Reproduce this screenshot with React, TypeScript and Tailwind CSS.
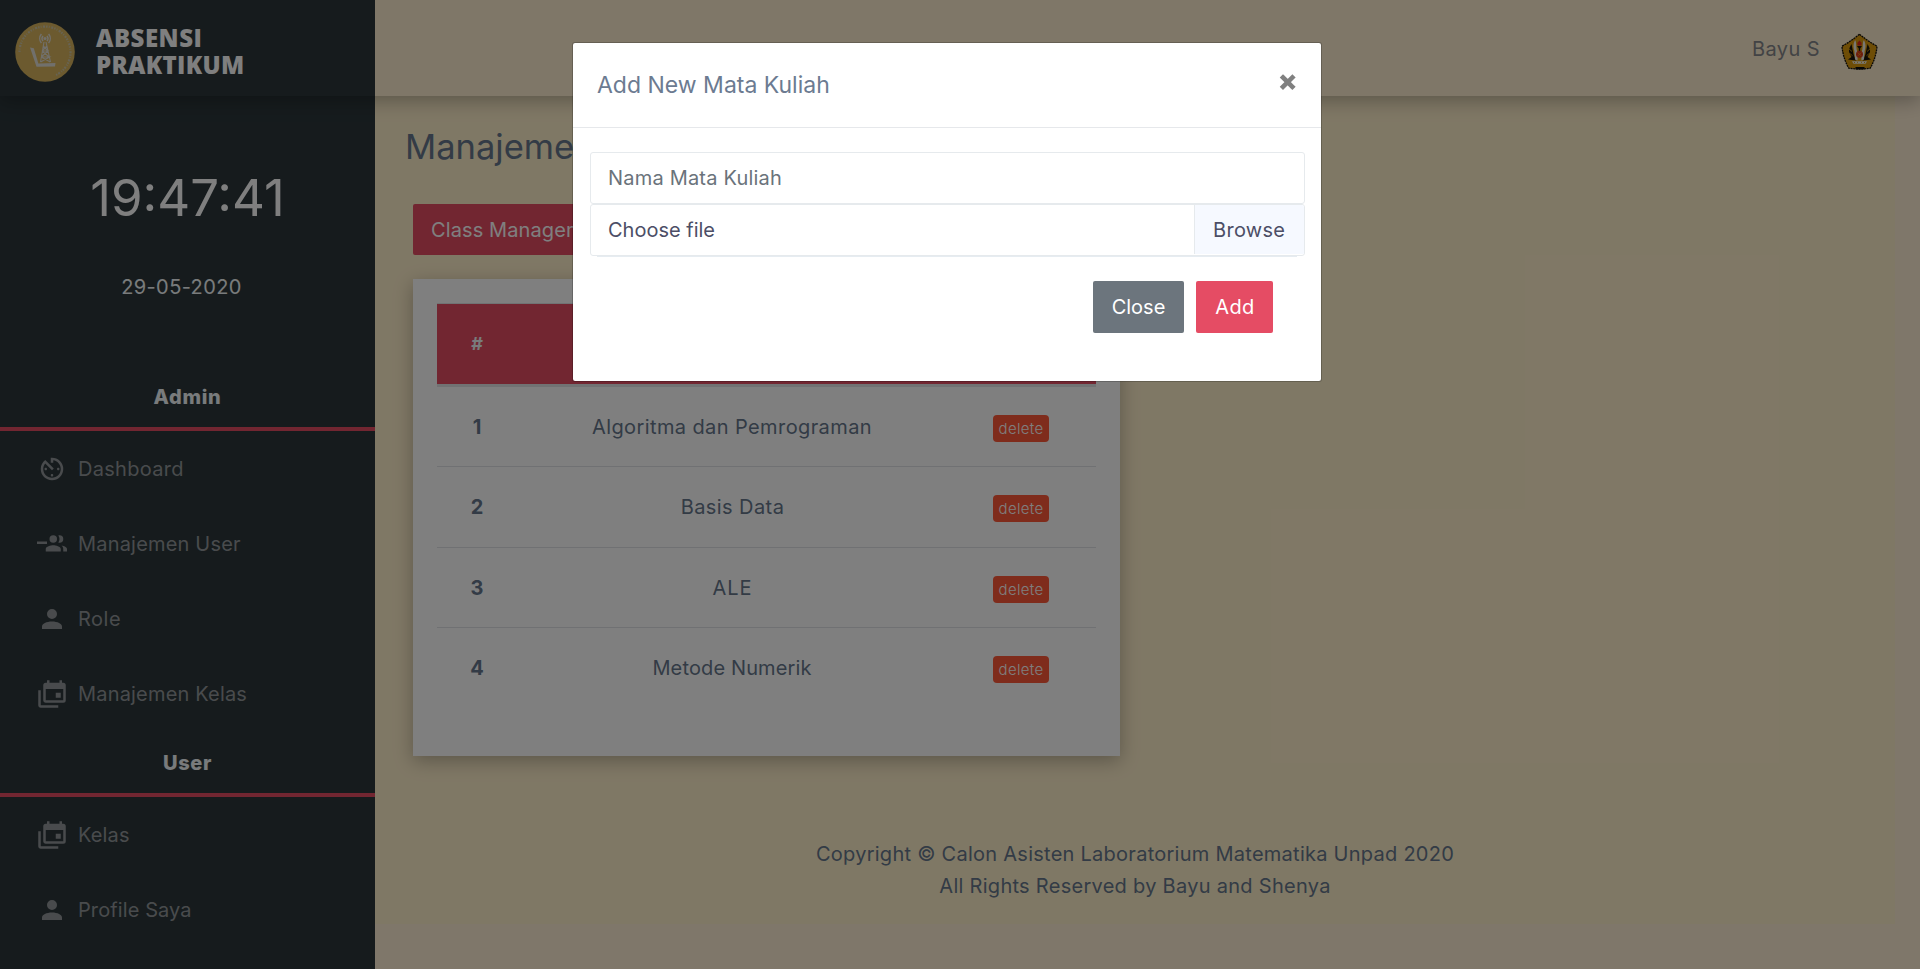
import { MdAvTimer } from "react-icons/md";
import type { ReactNode } from "react";

const PATHS = {
  users:
    "M13 13C11 13 7 14 7 16V18H19V16C19 14 15 13 13 13M19.62 13.16C20.45 13.88 21 14.82 21 16V18H24V16C24 14.46 21.63 13.5 19.62 13.16M13 11A3 3 0 0 0 16 8 3 3 0 0 0 13 5 3 3 0 0 0 10 8 3 3 0 0 0 13 11M18 11A3 3 0 0 0 21 8 3 3 0 0 0 18 5C17.68 5 17.37 5.05 17.08 5.14A5 5 0 0 1 18 8C18 9 17.69 10 17.08 10.85 17.37 10.95 17.68 11 18 11M8 10H0V12H8V10Z",
  account:
    "M12 4A4 4 0 0 1 16 8 4 4 0 0 1 12 12 4 4 0 0 1 8 8 4 4 0 0 1 12 4M12 14C16.42 14 20 15.79 20 18V20H4V18C4 15.79 7.58 14 12 14Z",
  calendar:
    "M21 17V8H7V17H21M21 3A2 2 0 0 1 23 5V17A2 2 0 0 1 21 19H7C5.89 19 5 18.1 5 17V5A2 2 0 0 1 7 3H8V1H10V3H18V1H20V3H21M3 21H17V23H3C1.89 23 1 22.1 1 21V9H3V21M19 15H15V11H19V15Z",
};

function Icon({ d }: { d: string }) {
  return (
    <svg viewBox="0 0 24 24" className="size-[30px] fill-current">
      <path d={d} />
    </svg>
  );
}

function BrandLogo() {
  return (
    <svg viewBox="0 0 60 60" className="size-[60px]">
      <circle cx="30" cy="30" r="29.8" fill="#d8b55e" />
      <path
        d="M4.5 30A25.5 25.5 0 1 1 40 53.5"
        fill="none"
        stroke="#cfc7a8"
        strokeWidth="2.2"
        strokeDasharray="1.4 1.3 0.8 1.6 2 1.1"
      />
      <path d="M15 25.5L18.8 26.2 23.4 41.5 40.5 41 40 44.4 21.5 44.8z" fill="#e3e0d8" />
      <path
        d="M29 20L25.5 40M31 20L35.5 40M28.2 24L33 29M32 24L27 29M27 29H33L26.2 35M27 29L34.2 35M26.2 35H34.5L25.6 40M26.2 35L35.2 40"
        fill="none"
        stroke="#e3e0d8"
        strokeWidth="1.1"
      />
      <path
        d="M26.4 12A7 7 0 0 0 26.4 21M33.6 12A7 7 0 0 1 33.6 21M28 14A4 4 0 0 0 28 19M32 14A4 4 0 0 1 32 19"
        fill="none"
        stroke="#e3e0d8"
        strokeWidth="1.5"
      />
      <circle cx="30" cy="16.5" r="1.5" fill="#e3e0d8" />
    </svg>
  );
}

function Emblem() {
  return (
    <svg viewBox="0 0 37 37" className="size-[37px]">
      <path
        d="M18.5 1.2Q26.5 8 36 13.2Q35 25 29.2 35.2Q18.5 36.8 7.8 35.2Q2 25 1 13.2Q10.5 8 18.5 1.2z"
        fill="#dc9a0c"
        stroke="#15120c"
        strokeWidth="1.3"
        strokeDasharray="2 0.7"
      />
      <path d="M14.5 35.2H23.5" stroke="#0b0b0b" strokeWidth="2.4" />
      <path
        d="M10.5 11C9 14 7.5 16 8 19.5L10.5 24 7 26.5 15 27.5 12.5 21zM26.5 11C28 14 29.5 16 29 19.5L26.5 24 30 26.5 22 27.5 24.5 21z"
        fill="#17130a"
      />
      <path d="M7.5 15.5l3.5 3M7.5 19.5l4 3.2M29.5 15.5l-3.5 3M29.5 19.5l-4 3.2" stroke="#dc9a0c" strokeWidth="0.8" />
      <path
        d="M13.8 7.5C12 11 12.2 15 13.4 18L14 26.5 16.6 27.5V20C14.8 15 15.6 11 14.6 7.5zM23.2 7.5C25 11 24.8 15 23.6 18L23 26.5 20.4 27.5V20C22.2 15 21.4 11 22.4 7.5z"
        fill="#f3f0e6"
      />
      <path d="M18.5 7.4L20.6 9.8V12.6H16.4V9.8z" fill="#e02a1c" />
      <path d="M16 13H21L19.2 15.4V18H17.8V15.4z" fill="#17130a" />
      <circle cx="18.5" cy="21.3" r="3.5" fill="#dd3a1a" />
      <path d="M16.5 19.5l4 3.6M20.5 19.5l-4 3.6" stroke="#f0a020" strokeWidth="0.7" />
      <path d="M11 28.2H26L24.5 30.8H12.5z" fill="#f3f0e6" />
      <path d="M13 29.5h1M16 29.3h1M20 29.3h1M23 29.5h1" stroke="#dc9a0c" strokeWidth="1" />
    </svg>
  );
}

function NavItem({ icon, label, track }: { icon: ReactNode; label: string; track: string }) {
  return (
    <li className="flex h-[75px] items-center gap-[11px] pl-[37px] text-[#93979a]">
      {icon}
      <span className={track}>{label}</span>
    </li>
  );
}

function NavHeading({ children }: { children: string }) {
  return (
    <div className="border-b-4 border-[#e44c62] pb-[15px] text-center font-extrabold tracking-[0.7px] text-[#f2f6f8]">
      {children}
    </div>
  );
}

const courses = [
  { name: "Algoritma dan Pemrograman", h: "h-[79px] pt-[25px]", track: "tracking-[0.4px] pl-px" },
  { name: "Basis Data", h: "h-[81px] border-t pt-[25px]", track: "tracking-[0.42px] pl-[2px]" },
  { name: "ALE", h: "h-[80px] border-t pt-[25px]", track: "tracking-[0.9px] pl-[2px]" },
  { name: "Metode Numerik", h: "h-[81px] border-t pt-[25px]", track: "tracking-[0.13px] pl-px" },
];

function Modal() {
  return (
    <div className="absolute inset-0 z-20 bg-black/50">
      <section className="mt-[42px] ml-[572px] h-[340px] w-[750px] rounded-[3px] border border-black/20 bg-white bg-clip-padding">
        <header className="flex h-[85px] justify-between border-b border-[#e6e8eb] pt-[24px] pr-[24px] pl-[24px]">
          <h5 className="text-[23px] leading-[36px] text-[#6c7b91]">Add New Mata Kuliah</h5>
          <svg viewBox="0 0 18 18" className="mt-[6px] size-[18px]">
            <path d="M4 4.4L13.4 13.8M13.4 4.4L4 13.8" stroke="#808080" strokeWidth="4.6" strokeLinecap="square" />
          </svg>
        </header>
        <div className="px-[17px] pt-[24px]">
          <input
            placeholder="Nama Mata Kuliah"
            className="block h-[52px] w-[715px] rounded-[3px] border border-[#e6eaed] bg-white px-[17px] tracking-[0.2px] placeholder:text-[#6a737b]"
          />
          <label className="flex h-[52px] w-[715px] justify-between overflow-hidden rounded-[3px] border border-[#e6eaed] text-[#4c4e66]">
            <span className="pt-[10px] pl-[17px]">Choose file</span>
            <span className="h-[49px] w-[110px] border-l border-[#e6eaed] bg-[#f6f9ff] pt-[10px] pl-[18px] tracking-[0.3px]">
              Browse
            </span>
          </label>
          <div className="mx-[7px] h-px bg-[#e6ecf1]" />
          <div className="mt-[24px] flex justify-end gap-[12px] pr-[31px] text-white">
            <button className="h-[52px] w-[91px] rounded-[2px] bg-[#6c757d]">Close</button>
            <button className="h-[52px] w-[77px] rounded-[2px] bg-[#e54c64] pl-px tracking-[0.4px]">Add</button>
          </div>
        </div>
      </section>
    </div>
  );
}

export default function App() {
  return (
    <div className="relative flex h-[969px] w-[1920px] flex-col overflow-hidden bg-[#ffefd5] font-['Inter',sans-serif] text-[20px] leading-[30px] text-[#66778c]">
      <header className="relative z-10 flex h-[96px] shrink-0 bg-[#ffeed0] shadow-[0_5px_18px_0_rgba(0,0,0,0.28)]">
        <div className="flex w-[375px] gap-[21px] bg-[#2c373b] pl-[15px]">
          <div className="pt-[22px]">
            <BrandLogo />
          </div>
          <div className="flex flex-col pt-[24px] font-['Open_Sans',sans-serif] text-[24px] leading-[27px] font-extrabold text-white">
            <span className="tracking-[0.5px]">ABSENSI</span>
            <span className="tracking-[0.3px]">PRAKTIKUM</span>
          </div>
        </div>
        <div className="flex flex-1 justify-end gap-[21px] pr-[42px]">
          <span className="pt-[34px] tracking-[0.4px] text-[#85878a]">Bayu S</span>
          <div className="pt-[33px]">
            <Emblem />
          </div>
        </div>
      </header>

      <div className="flex flex-1">
        <aside className="w-[375px] shrink-0 bg-[#2c373b]">
          <div className="pt-[70px] text-center text-[51px] leading-[64px] text-white">19:47:41</div>
          <div className="pt-[42px] pr-[12px] text-center tracking-[0.4px] text-[#f2f6f8]">29-05-2020</div>
          <div className="h-[80px]" />
          <NavHeading>Admin</NavHeading>
          <ul>
            <NavItem icon={<MdAvTimer className="size-[30px]" />} label="Dashboard" track="tracking-[0.3px]" />
            <NavItem icon={<Icon d={PATHS.users} />} label="Manajemen User" track="tracking-[0.19px]" />
            <NavItem icon={<Icon d={PATHS.account} />} label="Role" track="tracking-[0.5px]" />
            <NavItem icon={<Icon d={PATHS.calendar} />} label="Manajemen Kelas" track="tracking-[0.18px]" />
          </ul>
          <div className="h-[17px]" />
          <NavHeading>User</NavHeading>
          <ul>
            <NavItem icon={<Icon d={PATHS.calendar} />} label="Kelas" track="tracking-[0.15px]" />
            <NavItem icon={<Icon d={PATHS.account} />} label="Profile Saya" track="tracking-[0.1px]" />
          </ul>
        </aside>

        <main className="flex h-[828px] w-[1520px] flex-col bg-[#fff0cb]">
          <h2 className="pt-[26px] pl-[30px] text-[34.5px] leading-[50px]">Manajemen Mata Kuliah</h2>
          <button className="mt-[32px] ml-[38px] h-[51px] w-[200px] rounded-[2px] bg-[#e44c62] pl-[18px] text-left tracking-[0.1px] whitespace-nowrap text-white">
            Class Management
          </button>
          <section className="mt-[24px] ml-[38px] h-[477px] w-[707px] bg-white px-[24px] pt-[24px] shadow-[0_5px_18px_0_rgba(0,0,0,0.28)]">
            <div className="grid h-[84px] grid-cols-[80px_429px_150px] border-t border-b-[3px] border-[#e2e4e6] bg-[#e44c62] pt-[25px] text-center text-[18px] font-bold text-[#f2f6f8]">
              <span>#</span>
              <span>Mata Kuliah</span>
              <span>Action</span>
            </div>
            {courses.map((c, i) => (
              <div
                key={c.name}
                className={"grid grid-cols-[80px_429px_150px] border-[#e0e3e6] text-center " + c.h}
              >
                <span className="font-bold">{i + 1}</span>
                <span className={c.track}>{c.name}</span>
                <span className="flex justify-center pt-[3px]">
                  <span className="h-[27px] w-[56px] rounded-[4px] bg-[#fe5838] text-[15px] leading-[27px] font-light tracking-[0.3px] text-white">
                    delete
                  </span>
                </span>
              </div>
            ))}
          </section>
          <footer className="pt-[82px] text-center leading-[32px]">
            <p className="tracking-[0.26px]">Copyright © Calon Asisten Laboratorium Matematika Unpad 2020</p>
            <p className="tracking-[0.28px]">All Rights Reserved by Bayu and Shenya</p>
          </footer>
        </main>
      </div>

      <Modal />
    </div>
  );
}
